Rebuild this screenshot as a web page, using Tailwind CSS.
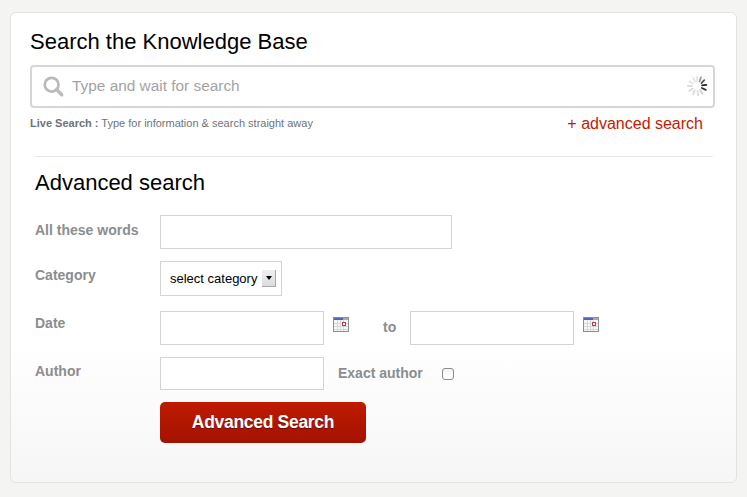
<!DOCTYPE html>
<html>
<head>
<meta charset="utf-8">
<script src="https://cdn.jsdelivr.net/npm/@tailwindcss/browser@4"></script>
</head>
<body class="bg-[#f4f4f2] font-['Liberation_Sans',Arial,sans-serif] h-[497px] w-[747px] overflow-hidden">
  <div class="ml-[10px] mt-[12px] w-[727px] h-[471px] box-border border border-[#e3e3e1] rounded-[6px] bg-gradient-to-b from-white from-[70%] to-[#f6f6f6] pl-[19px] pr-[21px] pt-[15px]">
    <h1 class="text-[22px] leading-[28px] text-black">Search the Knowledge Base</h1>

    <div class="mt-[9px] h-[43px] box-border border-2 border-[#d6d6d6] rounded-[4px] bg-white flex items-center pl-[10px] pr-[5px]">
      <svg width="22" height="22" viewBox="0 0 24 24" fill="none" stroke="#bababa" class="shrink-0 mb-[2px]">
        <circle cx="10.5" cy="10.5" r="7.5" stroke-width="3"/>
        <path d="M16 16L21.5 21.5" stroke-width="3.6" stroke-linecap="round"/>
      </svg>
      <span class="ml-[8px] mb-[2px] text-[15.4px] text-[#a3a3a3]">Type and wait for search</span>
      <svg width="22" height="22" viewBox="1 1 20 20" class="ml-auto mb-[2px] shrink-0" stroke-width="1.6" stroke-linecap="round">
        <path d="M11 2.5V6.5" stroke="#e4e4e4"/>
        <path d="M14.6 3.2L13.3 6.8" stroke="#9a9a9a"/>
        <path d="M17.6 5.6L15 8.4" stroke="#555"/>
        <path d="M19.5 10L15.6 10.5" stroke="#222"/>
        <path d="M19 14.5L15.4 12.8" stroke="#333"/>
        <path d="M16 18L13.8 14.6" stroke="#d0d0d0"/>
        <path d="M12 19.5L11.4 15.5" stroke="#dcdcdc"/>
        <path d="M7.5 18.5L9 15" stroke="#d8d8d8"/>
        <path d="M4 15.5L7.2 13.3" stroke="#dcdcdc"/>
        <path d="M2.6 11L6.5 11" stroke="#e0e0e0"/>
        <path d="M4 6.8L7.4 8.8" stroke="#e4e4e4"/>
        <path d="M7.4 3.4L9.2 6.8" stroke="#e4e4e4"/>
      </svg>
    </div>

    <div class="flex justify-between items-start pr-[12px] mt-[7px]">
      <p class="text-[11px] leading-[16px] text-[#6f7377]"><b>Live Search :</b> Type for information &amp; search straight away</p>
      <a class="text-[16px] leading-[18px] text-[#c41a00]">+ advanced search</a>
    </div>

    <hr class="ml-[4px] mr-[2px] mt-[23px] border-t border-[#e9e9e9]">

    <div class="pl-[5px]">
      <h2 class="mt-[12px] text-[22px] leading-[28px] text-black">Advanced search</h2>

      <div class="mt-[18px] flex items-start text-[14px] font-bold text-[#8b8d8f]">
        <label class="w-[125px] mt-[6px] leading-[18px]">All these words</label>
        <input type="text" class="w-[292px] h-[34px] box-border border border-[#d4d4d4] bg-white">
      </div>

      <div class="mt-[12px] flex items-start text-[14px] font-bold text-[#8b8d8f]">
        <label class="w-[125px] mt-[5px] leading-[18px]">Category</label>
        <div class="w-[122px] h-[35px] box-border border border-[#d4d4d4] bg-white flex items-center pl-[9px]">
          <span class="text-[13px] font-normal text-black">select category</span>
          <span class="ml-[5px] w-[14px] h-[17px] bg-gradient-to-b from-[#f0f0f0] to-[#dcdcdc] border-r border-b border-[#a8a8a8] flex items-center justify-center">
            <span class="w-0 h-0 border-x-[3px] border-x-transparent border-t-[4px] border-t-black"></span>
          </span>
        </div>
      </div>

      <div class="mt-[15px] flex items-start text-[14px] font-bold text-[#8b8d8f]">
        <label class="w-[125px] mt-[3px] leading-[18px]">Date</label>
        <input type="text" class="w-[164px] h-[34px] box-border border border-[#d4d4d4] bg-white">
        <svg width="16" height="15" viewBox="0 0 16 15" class="ml-[9px] mt-[6px]">
          <rect x="0.5" y="0.5" width="15" height="14" fill="#f7f7f7" stroke="#8e8e8e"/>
          <rect x="1" y="1" width="9" height="2" fill="#5b5fc0"/>
          <rect x="10" y="1" width="5" height="2" fill="#a9a9a9"/>
          <path d="M1 6.5H15M1 9.5H15M1 12.5H15M4.5 3V14M7.5 3V14M10.5 3V14" stroke="#d8d8d8" fill="none"/>
          <rect x="9.5" y="5.5" width="3" height="3" fill="#fff" stroke="#b5423a"/>
        </svg>
        <span class="ml-[34px] mt-[7px] leading-[18px]">to</span>
        <input type="text" class="ml-[14px] w-[164px] h-[34px] box-border border border-[#d4d4d4] bg-white">
        <svg width="16" height="15" viewBox="0 0 16 15" class="ml-[9px] mt-[6px]">
          <rect x="0.5" y="0.5" width="15" height="14" fill="#f7f7f7" stroke="#8e8e8e"/>
          <rect x="1" y="1" width="9" height="2" fill="#5b5fc0"/>
          <rect x="10" y="1" width="5" height="2" fill="#a9a9a9"/>
          <path d="M1 6.5H15M1 9.5H15M1 12.5H15M4.5 3V14M7.5 3V14M10.5 3V14" stroke="#d8d8d8" fill="none"/>
          <rect x="9.5" y="5.5" width="3" height="3" fill="#fff" stroke="#b5423a"/>
        </svg>
      </div>

      <div class="mt-[12px] flex items-start text-[14px] font-bold text-[#8b8d8f]">
        <label class="w-[125px] mt-[5px] leading-[18px]">Author</label>
        <input type="text" class="w-[164px] h-[33px] box-border border border-[#d4d4d4] bg-white">
        <span class="ml-[14px] mt-[7px] leading-[18px]">Exact author</span>
        <span class="ml-[19px] mt-[11px] w-[12px] h-[12px] box-border border border-[#8a8a8a] rounded-[3px] bg-gradient-to-b from-[#f4f4f4] to-white"></span>
      </div>

      <button class="ml-[125px] mt-[12px] block w-[206px] h-[41px] rounded-[5px] bg-gradient-to-b from-[#bf1a00] to-[#a31300] text-white text-[17.5px] font-bold tracking-[-0.3px] [text-shadow:0_1px_1px_rgba(0,0,0,0.4)]">Advanced Search</button>
    </div>
  </div>
</body>
</html>
